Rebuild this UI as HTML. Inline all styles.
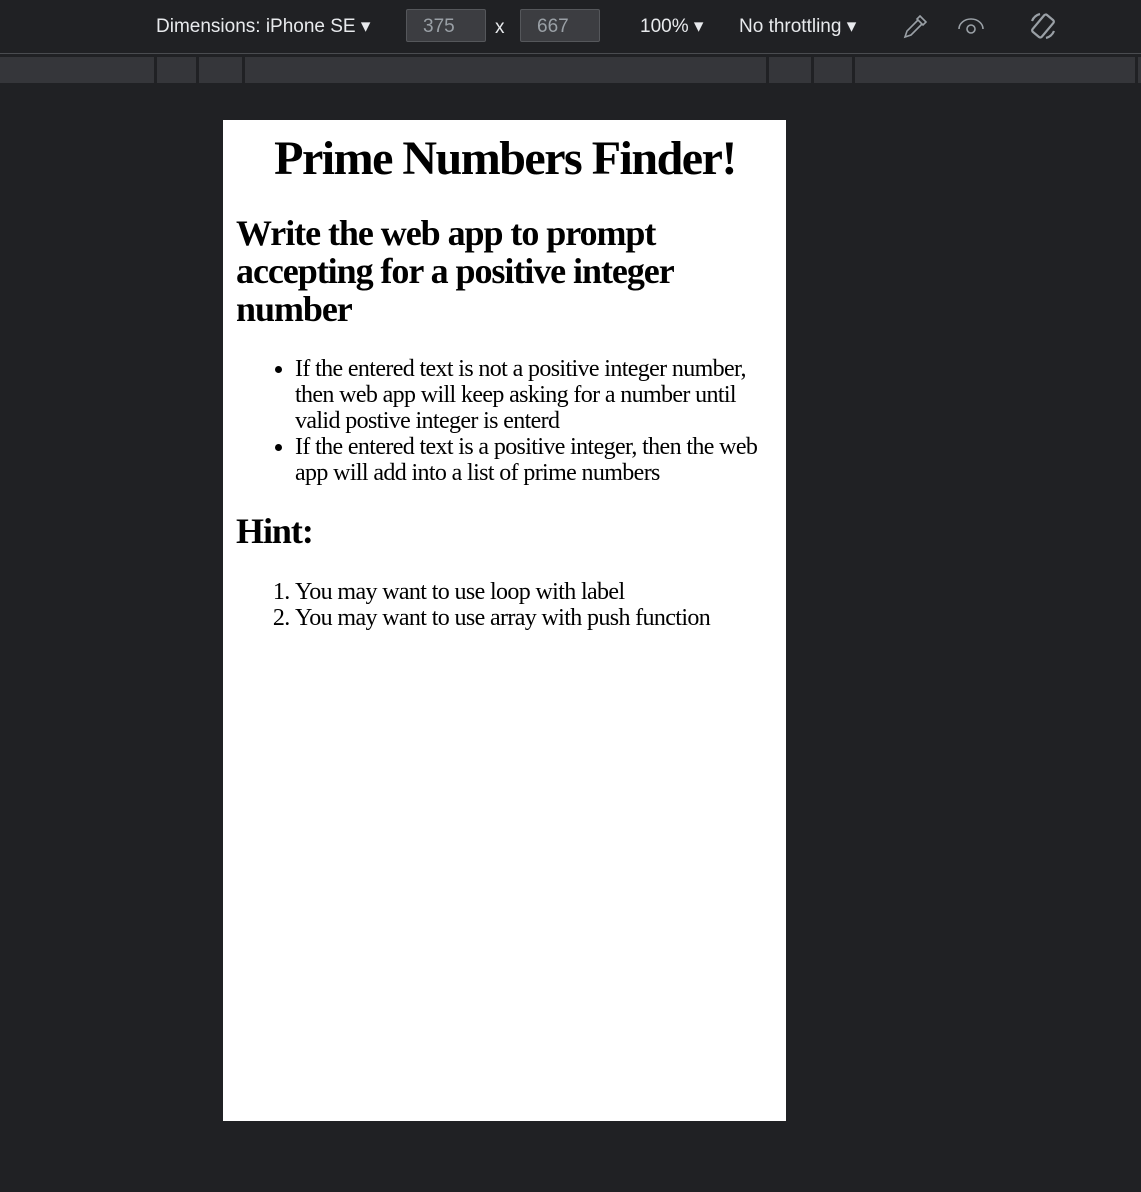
<!DOCTYPE html>
<html><head><style>
body{margin:0;width:1141px;height:1192px;background:#202124;position:relative;overflow:hidden;font-family:"Liberation Sans",sans-serif}
.tb{position:absolute;top:0;left:0;width:1141px;height:53px;background:#202124;border-bottom:1px solid #4a4c50}
.t{position:absolute;color:#e8eaed;font-size:19px;top:15px}
.box{position:absolute;top:9px;height:33px;background:#3c3d41;border:1px solid #55575b;border-radius:2px;color:#9aa0a6;font-size:19px;line-height:33px;padding-left:16px;box-sizing:border-box}
.bar{position:absolute;top:57px;left:0;width:1141px;height:26px;background:#35363a}
.d{position:absolute;top:57px;width:3px;height:26px;background:#202124}
.vp{position:absolute;left:223px;top:120px;width:563px;height:1001px;background:#fff;font-family:"Liberation Serif",serif;color:#000}
.vp>*{position:absolute;margin:0;left:13px;right:12px}
h1{font-size:48px;line-height:55px;text-align:center;font-weight:bold;letter-spacing:-1.5px}
h2{font-size:36px;line-height:38px;font-weight:bold;letter-spacing:-1.05px}
ul,ol{font-size:24px;line-height:26px;padding-left:59px;letter-spacing:-0.63px}
</style></head><body>
<div class="tb">
<div class="t" style="left:156px">Dimensions: iPhone SE ▾</div>
<div class="box" style="left:406px;width:80px">375</div>
<div class="t" style="left:495px;top:17px">x</div>
<div class="box" style="left:520px;width:80px">667</div>
<div class="t" style="left:640px">100% ▾</div>
<div class="t" style="left:739px">No throttling ▾</div>
<svg style="position:absolute;left:900px;top:12px" width="30" height="30" viewBox="0 0 30 30" fill="none" stroke="#9aa0a6" stroke-width="1.6"><path d="M20 4l6 6-3 3-6-6zM18 8L7 19l-2 6 6-2 11-11"/></svg>
<svg style="position:absolute;left:956px;top:14px" width="30" height="26" viewBox="0 0 30 26" fill="none" stroke="#9aa0a6" stroke-width="1.6"><path d="M3 15a12 10 0 0 1 24 0"/><circle cx="15" cy="15" r="4"/></svg>
<svg style="position:absolute;left:1026px;top:9px" width="34" height="34" viewBox="0 0 34 34" fill="none" stroke="#9aa0a6" stroke-width="2.2"><rect x="11" y="6" width="12" height="22" rx="2" transform="rotate(40 17 17)"/><path d="M6 12a12 12 0 0 1 8-7M28 22a12 12 0 0 1-8 7"/></svg>
</div>
<div class="bar"></div>
<div class="d" style="left:154px"></div><div class="d" style="left:196px"></div><div class="d" style="left:242px"></div><div class="d" style="left:766px"></div><div class="d" style="left:811px"></div><div class="d" style="left:852px"></div><div class="d" style="left:1135px"></div>
<div class="vp">
<h1 style="top:11px">Prime Numbers Finder!</h1>
<h2 style="top:94px">Write the web app to prompt accepting for a positive integer number</h2>
<ul style="top:236px"><li>If the entered text is not a positive integer number, then web app will keep asking for a number until valid postive integer is enterd</li><li>If the entered text is a positive integer, then the web app will add into a list of prime numbers</li></ul>
<h2 style="top:392px">Hint:</h2>
<ol style="top:459px"><li>You may want to use loop with label</li><li>You may want to use array with push function</li></ol>
</div>
</body></html>
